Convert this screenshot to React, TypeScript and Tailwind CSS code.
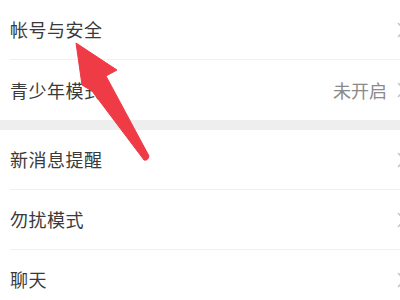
import React from "react";

const font = { fontFamily: '"Noto Sans CJK SC", "Noto Sans", sans-serif' };

function Chevron() {
  return (
    <svg width="9" height="16" viewBox="0 0 9 16" className="shrink-0 -mr-[6px]">
      <path d="M1.5 1.5 L7.5 8 L1.5 14.5" fill="none" stroke="#c4c4c4" strokeWidth="1.6" strokeLinecap="round" strokeLinejoin="round" />
    </svg>
  );
}

function Row({ label, value, divider = true }: { label: string; value?: string; divider?: boolean }) {
  return (
    <div className="pl-[10px]">
      <div className={`h-[60px] flex items-center justify-between ${divider ? "border-b border-[#f0f0f0]" : ""}`}>
        <span className="text-[18px] text-[#3a3a3a] tracking-[0.5px]">{label}</span>
        <div className="flex items-center gap-[10px]">
          {value && <span className="text-[18px] text-[#8a8a8a]">{value}</span>}
          <Chevron />
        </div>
      </div>
    </div>
  );
}

export default function App() {
  return (
    <div className="relative w-[400px] h-[300px] bg-white overflow-hidden" style={font}>
      <Row label="帐号与安全" />
      <Row label="青少年模式" value="未开启" divider={false} />
      <div className="h-[10px] bg-[#eeeeee]" />
      <Row label="新消息提醒" />
      <Row label="勿扰模式" />
      <Row label="聊天" />

      {/* annotation arrow */}
      <svg className="absolute left-0 top-0 pointer-events-none" width="400" height="300" viewBox="0 0 400 300">
        <path
          d="M76 43 L117 70 L106 76 L149 156 Q148 161 144 160 L92 91 L82 85 Z"
          fill="#ef3b46"
          stroke="#ef3b46"
          strokeWidth="1"
          strokeLinejoin="round"
        />
      </svg>
    </div>
  );
}
